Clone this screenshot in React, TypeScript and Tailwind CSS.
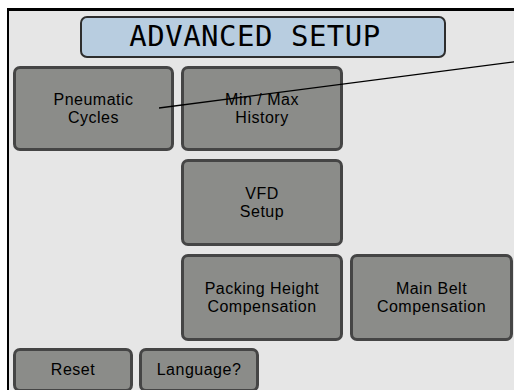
const btn =
  "flex flex-col items-center justify-center rounded-[7px] border-[3px] border-[#454545] bg-[#8b8c89] text-[16px] leading-[18px] tracking-[0.5px] text-black";

function Btn({ lines, className = "" }: { lines: string[]; className?: string }) {
  return (
    <div className={`${btn} ${className}`}>
      {lines.map((l) => (
        <span key={l} className="whitespace-nowrap">
          {l}
        </span>
      ))}
    </div>
  );
}

export default function App() {
  return (
    <div className="relative h-[390px] w-[514px] overflow-hidden bg-white font-['Liberation_Sans',Arial,sans-serif]">
      <div className="ml-[7px] mt-[8px] h-[400px] w-[520px] border-l-[2px] border-t-[3px] border-black bg-[#e6e6e6] pl-[4px] pt-[5px]">
        {/* title */}
        <div className="ml-[67px] flex h-[42px] w-[366px] items-center justify-center rounded-[7px] border-[2px] border-[#2e2e2e] bg-[#b8cde0] pr-[16px] font-['DejaVu_Sans_Mono',monospace] text-[29px] tracking-[0.5px] text-black">
          ADVANCED SETUP
        </div>

        <div className="mt-[8px] grid grid-cols-[161px_162px_163px] grid-rows-[85px_87px_87px] gap-x-[7px] gap-y-[8px]">
          <Btn lines={["Pneumatic", "Cycles"]} />
          <Btn lines={["Min / Max", "History"]} />
          <div />
          <div />
          <Btn lines={["VFD", "Setup"]} />
          <div />
          <div />
          <Btn lines={["Packing Height", "Compensation"]} />
          <Btn lines={["Main Belt", "Compensation"]} />
        </div>

        <div className="mt-[7px] flex gap-[6px]">
          <Btn lines={["Reset"]} className="h-[44px] w-[120px]" />
          <Btn lines={["Language?"]} className="h-[44px] w-[120px]" />
        </div>
      </div>

      {/* stray line drawn over the screen */}
      <svg className="pointer-events-none absolute left-0 top-0" width="514" height="390">
        <line x1="159" y1="108" x2="520" y2="61" stroke="black" strokeWidth="1.3" />
      </svg>
    </div>
  );
}
